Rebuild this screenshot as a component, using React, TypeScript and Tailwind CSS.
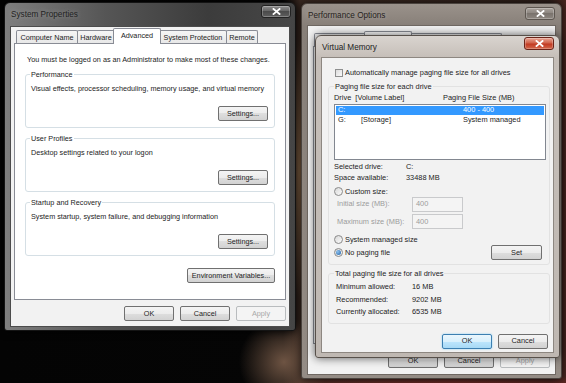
import React from 'react'

const btnNormal =
  'border-[#707070] bg-[linear-gradient(#f4f4f4,#ececec_50%,#dedede_50%,#d2d2d2)] text-[#1e1e1e]'
const btnDisabled = 'border-[#b9bcbe] bg-[#f4f4f4] text-[#a8a8a8]'
const btnFocused =
  'border-[#3c7fb1] bg-[linear-gradient(#eaf6fd,#d9f0fc_50%,#bee6fd_50%,#a7d9f5)] shadow-[0_0_2px_#7fcdf5] text-[#1e1e1e]'

function Button({
  children,
  w = 'w-[50px]',
  disabled,
  focused,
}: {
  children: React.ReactNode
  w?: string
  disabled?: boolean
  focused?: boolean
}) {
  const look = disabled ? btnDisabled : focused ? btnFocused : btnNormal
  return (
    <div className={`${w} ${look} h-[15px] shrink-0 rounded-[2px] border flex items-center justify-center leading-none`}>
      {children}
    </div>
  )
}

function CloseButton({ kind }: { kind: 'dark' | 'mid' | 'red' }) {
  const look =
    kind === 'red'
      ? 'border-[#6b2419] bg-[linear-gradient(#e9a796,#d0624a_45%,#c23a22_55%,#d2684c)]'
      : kind === 'mid'
        ? 'border-[#5d5650] bg-[linear-gradient(#aaa39d,#8b847e_50%,#7a736d_50%,#8e8780)]'
        : 'border-[#222] bg-[linear-gradient(#8d8d8d,#626262_50%,#4b4b4b_50%,#5e5e5e)]'
  return (
    <div className={`${look} w-[30px] h-[13px] rounded-[3px] border flex items-center justify-center shadow-[inset_0_0_0_1px_rgba(255,255,255,0.25)]`}>
      <svg width="9" height="7" viewBox="0 0 9 7">
        <path d="M1.5 1 L7.5 6 M7.5 1 L1.5 6" stroke="#fff" strokeWidth="1.8" strokeLinecap="square" />
      </svg>
    </div>
  )
}

function Tabs({ tabs, active }: { tabs: [string, string][]; active: number }) {
  return (
    <div className="relative z-10 -mb-px flex items-end h-[16px]">
      {tabs.map(([label, w], i) =>
        i === active ? (
          <div
            key={label}
            className={`${w} -mx-[2px] h-[16px] border border-b-0 border-[#898c95] bg-white rounded-t-[2px] flex justify-center pt-[3px] leading-none relative z-10`}
          >
            {label}
          </div>
        ) : (
          <div
            key={label}
            className={`${w} ${i > 0 && i !== active + 1 ? '-ml-px' : ''} mb-px h-[13px] border border-b-0 border-[#898c95] bg-[linear-gradient(#f5f5f5,#e8e8e8)] rounded-t-[2px] flex justify-center pt-[3px] leading-none`}
          >
            {label}
          </div>
        ),
      )}
    </div>
  )
}

function Group({ title, desc }: { title: string; desc: string }) {
  return (
    <fieldset className="mt-[6px] border border-[#d5dfe5] rounded-[3px] pl-[5px] pr-[6px] pb-[6px]">
      <legend className="leading-[9px] px-[1px] -ml-[1px]">{title}</legend>
      <p className="mt-[5px] leading-[9px] whitespace-nowrap">{desc}</p>
      <div className="mt-[13px] flex justify-end">
        <Button>Settings...</Button>
      </div>
    </fieldset>
  )
}

function Radio({ checked }: { checked?: boolean }) {
  return (
    <span className="w-[9px] h-[9px] shrink-0 rounded-full border border-[#8a8a8a] bg-[linear-gradient(135deg,#d8d8d8,#fbfbfb)] flex items-center justify-center">
      {checked && <span className="w-[5px] h-[5px] rounded-full bg-[radial-gradient(circle_at_35%_35%,#8fc3ef,#1d5fa6)]" />}
    </span>
  )
}

function SystemProperties() {
  return (
    <div className="absolute z-0 isolate left-[4px] top-[2px] w-[292px] h-[329px] rounded-t-[6px] rounded-b-[3px] border border-[#141414] bg-[linear-gradient(90deg,#7e7e7e,#555_35%,#3c3c3c_70%,#474747)] px-[5px] pb-[3px] flex flex-col text-[7.25px] shadow-[0_0_8px_rgba(0,0,0,0.9)]">
      <div className="h-[23px] flex items-start justify-between">
        <span className="mt-[8px] ml-[1px] text-[8.2px] leading-none text-[#1f1f1f] [text-shadow:0_0_5px_rgba(255,255,255,0.35)]">
          System Properties
        </span>
        <div className="mt-[2px] -mr-[1px]">
          <CloseButton kind="dark" />
        </div>
      </div>
      <div className="flex-1 border border-[#4c4c4c] bg-[#f2f2f2] px-[3px] pt-[1px] flex flex-col">
        <div className="pl-[2px]">
          <Tabs
            active={2}
            tabs={[
              ['Computer Name', 'w-[62px]'],
              ['Hardware', 'w-[38px]'],
              ['Advanced', 'w-[48px]'],
              ['System Protection', 'w-[68px]'],
              ['Remote', 'w-[32px]'],
            ]}
          />
        </div>
        <div className="flex-1 border border-[#898c95] bg-white px-[10px] pt-[11px] flex flex-col">
          <p className="ml-[2px] leading-[9px] whitespace-nowrap">
            You must be logged on as an Administrator to make most of these changes.
          </p>
          <Group title="Performance" desc="Visual effects, processor scheduling, memory usage, and virtual memory" />
          <Group title="User Profiles" desc="Desktop settings related to your logon" />
          <Group title="Startup and Recovery" desc="System startup, system failure, and debugging information" />
          <div className="mt-[12px] flex justify-end">
            <Button w="w-[88px]">Environment Variables...</Button>
          </div>
        </div>
        <div className="flex justify-end gap-[6px] pt-[6px] pb-[5px]">
          <Button>OK</Button>
          <Button>Cancel</Button>
          <Button disabled>Apply</Button>
        </div>
      </div>
    </div>
  )
}

function PerformanceOptions() {
  return (
    <div className="absolute z-10 isolate left-[301px] top-[3px] w-[261px] h-[376px] rounded-t-[6px] rounded-b-[3px] border border-[#4a433e] bg-[linear-gradient(#9a928b,#877f78_22px,#948c85)] px-[5px] pb-[3px] flex flex-col text-[7.4px] shadow-[0_0_8px_rgba(0,0,0,0.7)]">
      <div className="h-[21px] flex items-start justify-between">
        <span className="mt-[8px] ml-[1px] text-[8.2px] leading-none text-[#262220] [text-shadow:0_0_5px_rgba(255,255,255,0.35)]">
          Performance Options
        </span>
        <div className="mt-[3px] mr-[1px]">
          <CloseButton kind="mid" />
        </div>
      </div>
      <div className="flex-1 border border-[#6f6862] bg-[#f2f2f2] px-[5px] pt-[5px] flex flex-col">
        <div className="pl-[1px]">
          <Tabs
            active={1}
            tabs={[
              ['Visual Effects', 'w-[52px]'],
              ['Advanced', 'w-[48px]'],
              ['Data Execution Prevention', 'w-[92px]'],
            ]}
          />
        </div>
        <div className="flex-1 border border-[#898c95] bg-white" />
        <div className="flex justify-end gap-[6px] pt-[9px] pb-[6px]">
          <Button>OK</Button>
          <Button>Cancel</Button>
          <Button disabled>Apply</Button>
        </div>
      </div>
    </div>
  )
}

function VirtualMemory() {
  return (
    <div className="absolute z-20 isolate left-[315px] top-[35px] w-[245px] h-[323px] rounded-t-[6px] rounded-b-[3px] border border-[#57504a] bg-[linear-gradient(#d9d4cf,#c5beb8_22px,#bfb8b2)] px-[5px] pb-[4px] flex flex-col text-[7.4px] shadow-[0_0_10px_rgba(0,0,0,0.65)]">
      <div className="h-[21px] flex items-start justify-between">
        <span className="mt-[8px] ml-[1px] text-[8.2px] leading-none text-[#222]">Virtual Memory</span>
        <div className="mt-[1px]">
          <CloseButton kind="red" />
        </div>
      </div>
      <div className="flex-1 border border-[#8d8781] bg-[#f2f2f2] pl-[6px] pr-[3px] pt-[10px] flex flex-col">
        <div className="ml-[7px] flex items-center gap-[2px] leading-[9px]">
          <span className="w-[8px] h-[8px] border border-[#8e8f8f] bg-[linear-gradient(135deg,#dcdcdc,#fafafa)]" />
          <span>Automatically manage paging file size for all drives</span>
        </div>

        <fieldset className="mt-[5px] border border-[#e2e2e2] rounded-[3px] pl-[5px] pr-[3px] pb-[4px]">
          <legend className="leading-[9px] px-[1px]">Paging file size for each drive</legend>
          <div className="mt-[2px] flex leading-[9px]">
            <span className="w-[109px]">Drive&nbsp; [Volume Label]</span>
            <span>Paging File Size (MB)</span>
          </div>
          <div className="mt-[1.5px] h-[56px] border border-[#828790] bg-white p-px">
            <div className="h-[9px] bg-[#3399ff] text-white flex items-center leading-none">
              <span className="pl-[2px] w-[127px]">C:</span>
              <span>400 - 400</span>
            </div>
            <div className="mt-[1px] h-[9px] flex items-center leading-none">
              <span className="pl-[2px] w-[25px]">G:</span>
              <span className="w-[102px]">[Storage]</span>
              <span>System managed</span>
            </div>
          </div>
          <div className="mt-[1.5px] leading-[11px]">
            <div className="flex">
              <span className="w-[72px]">Selected drive:</span>
              <span>C:</span>
            </div>
            <div className="flex">
              <span className="w-[72px]">Space available:</span>
              <span>33488 MB</span>
            </div>
          </div>
          <div className="mt-[4px] flex items-center gap-[2px] leading-[9px]">
            <Radio />
            <span>Custom size:</span>
          </div>
          <div className="h-[16px] flex items-center text-[#9c9c9c]">
            <span className="pl-[3px] w-[78px]">Initial size (MB):</span>
            <span className="w-[51px] h-[15px] border border-[#c9cacc] bg-[#f4f4f4] pl-[3px] flex items-center">400</span>
          </div>
          <div className="mt-[1.5px] h-[16px] flex items-center text-[#9c9c9c]">
            <span className="pl-[3px] w-[78px]">Maximum size (MB):</span>
            <span className="w-[51px] h-[15px] border border-[#c9cacc] bg-[#f4f4f4] pl-[3px] flex items-center">400</span>
          </div>
          <div className="mt-[5px] flex items-center gap-[2px] leading-[9px]">
            <Radio />
            <span>System managed size</span>
          </div>
          <div className="mt-[1.5px] h-[15px] flex items-center">
            <div className="flex items-center gap-[2px]">
              <Radio checked />
              <span>No paging file</span>
            </div>
            <div className="ml-auto mr-[4px]">
              <Button w="w-[51px]">Set</Button>
            </div>
          </div>
        </fieldset>

        <fieldset className="mt-[4px] border border-[#e2e2e2] rounded-[3px] pl-[5px] pr-[3px] pb-[4px]">
          <legend className="leading-[9px] px-[1px]">Total paging file size for all drives</legend>
          <div className="mt-[3px] pl-[2px] leading-[12.5px]">
            <div className="flex">
              <span className="w-[76px]">Minimum allowed:</span>
              <span>16 MB</span>
            </div>
            <div className="flex">
              <span className="w-[76px]">Recommended:</span>
              <span>9202 MB</span>
            </div>
            <div className="flex">
              <span className="w-[76px]">Currently allocated:</span>
              <span>6535 MB</span>
            </div>
          </div>
        </fieldset>

        <div className="mt-[10px] mr-[2px] flex justify-end gap-[6px]">
          <Button focused>OK</Button>
          <Button>Cancel</Button>
        </div>
      </div>
    </div>
  )
}

export default function App() {
  return (
    <div className="relative w-[566px] h-[383px] overflow-hidden text-[#1c1c1c] font-['Liberation_Sans',Arial,sans-serif] bg-[radial-gradient(10px_130px_at_299px_170px,#8a6849,transparent),radial-gradient(45px_45px_at_284px_362px,#6e5443,transparent),radial-gradient(220px_18px_at_450px_392px,#9a2a28,transparent),linear-gradient(90deg,#040404_0,#050505_50%,#3b2a22_53%,#2e201b_97%,#4a2620_100%)]">
      <SystemProperties />
      <PerformanceOptions />
      <VirtualMemory />
    </div>
  )
}
